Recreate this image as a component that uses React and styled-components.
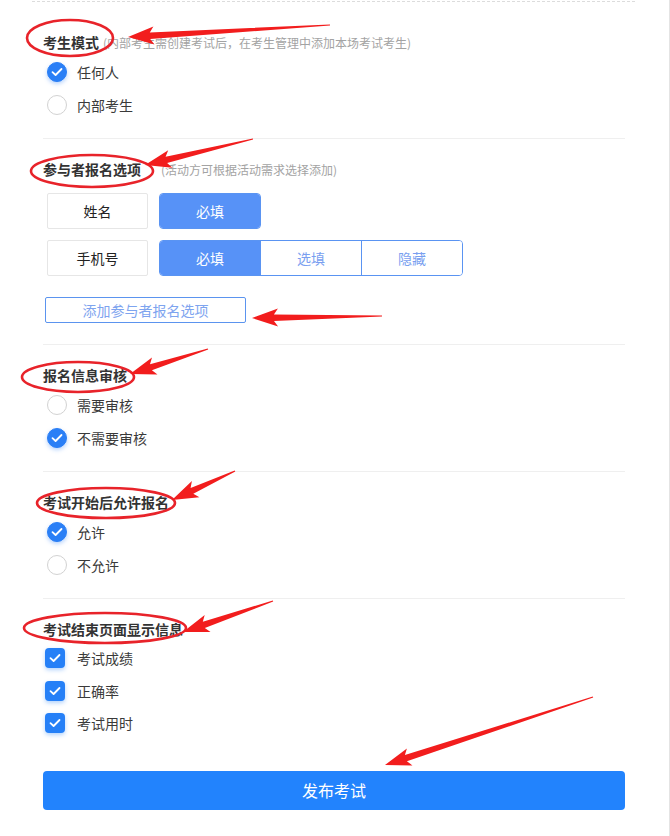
import React from "react";
import styled, { createGlobalStyle } from "styled-components";

const GlobalStyle = createGlobalStyle`
  body {
    margin: 0;
    background: #fff;
    font-family: "Noto Sans CJK SC", "Noto Sans", sans-serif;
  }
  * { box-sizing: border-box; }
`;

const sections = [
  {
    title: "考生模式",
    hint: "(内部考生需创建考试后，在考生管理中添加本场考试考生)",
    hintGap: 4,
    type: "radio",
    options: [
      { label: "任何人", checked: true },
      { label: "内部考生", checked: false },
    ],
  },
  { title: "参与者报名选项", hint: "(活动方可根据活动需求选择添加)", hintGap: 20, type: "fields" },
  {
    title: "报名信息审核",
    type: "radio",
    options: [
      { label: "需要审核", checked: false },
      { label: "不需要审核", checked: true },
    ],
  },
  {
    title: "考试开始后允许报名",
    type: "radio",
    options: [
      { label: "允许", checked: true },
      { label: "不允许", checked: false },
    ],
  },
  {
    title: "考试结束页面显示信息",
    type: "checkbox",
    options: [
      { label: "考试成绩", checked: true },
      { label: "正确率", checked: true },
      { label: "考试用时", checked: true },
    ],
  },
];

// red markup drawn on top of the screenshot
const ellipses = [
  { cx: 70, cy: 38, rx: 43, ry: 18 },
  { cx: 92, cy: 171, rx: 61, ry: 16 },
  { cx: 78, cy: 377, rx: 56, ry: 15 },
  { cx: 106, cy: 503, rx: 69, ry: 15 },
  { cx: 105, cy: 628, rx: 81, ry: 15 },
];

const arrows = [
  [330, 25, 128, 37],
  [253, 139, 145, 165],
  [382, 316, 252, 318],
  [208, 349, 130, 374],
  [235, 471, 172, 500],
  [273, 601, 183, 632],
  [593, 697, 385, 765],
];

function arrowPoints([x1, y1, x2, y2]) {
  const len = Math.hypot(x2 - x1, y2 - y1);
  const dx = (x2 - x1) / len;
  const dy = (y2 - y1) / len;
  const nx = -dy;
  const ny = dx;
  const headLen = 22;
  const bx = x2 - dx * headLen;
  const by = y2 - dy * headLen;
  const p = (x, y) => `${x.toFixed(1)},${y.toFixed(1)}`;
  return [
    p(x1 + nx * 0.6, y1 + ny * 0.6),
    p(bx + nx * 3.2, by + ny * 3.2),
    p(bx - dx * 4 + nx * 9, by - dy * 4 + ny * 9),
    p(x2, y2),
    p(bx - dx * 4 - nx * 9, by - dy * 4 - ny * 9),
    p(bx - nx * 3.2, by - ny * 3.2),
    p(x1 - nx * 0.6, y1 - ny * 0.6),
  ].join(" ");
}

function CheckMark() {
  return (
    <svg width="12" height="10" viewBox="0 0 12 10">
      <path d="M1.5 5.2 L4.6 8 L10.5 2" fill="none" stroke="#fff" strokeWidth="1.8" strokeLinecap="round" strokeLinejoin="round" />
    </svg>
  );
}

function Option({ type, label, checked }) {
  return (
    <OptionRow $type={type}>
      {type === "radio" ? (
        <RadioDot $checked={checked}>{checked && <CheckMark />}</RadioDot>
      ) : (
        <CheckBox>{checked && <CheckMark />}</CheckBox>
      )}
      <OptionLabel>{label}</OptionLabel>
    </OptionRow>
  );
}

function Fields() {
  return (
    <>
      <FieldRow>
        <FieldName>姓名</FieldName>
        <Segment $alone>
          <SegItem $active>必填</SegItem>
        </Segment>
      </FieldRow>
      <FieldRow $gap>
        <FieldName>手机号</FieldName>
        <Segment>
          <SegItem $active>必填</SegItem>
          <SegItem>选填</SegItem>
          <SegItem>隐藏</SegItem>
        </Segment>
      </FieldRow>
      <AddButton>添加参与者报名选项</AddButton>
    </>
  );
}

export default function App() {
  return (
    <>
      <GlobalStyle />
      <Page>
        <Wrapper>
          {sections.map((s) => (
            <Section key={s.title}>
              <TitleRow>
                <Title>{s.title}</Title>
                {s.hint && <Hint $gap={s.hintGap}>{s.hint}</Hint>}
              </TitleRow>
              {s.type === "fields" ? (
                <Fields />
              ) : (
                <OptionList>
                  {s.options.map((o) => (
                    <Option key={o.label} type={s.type} {...o} />
                  ))}
                </OptionList>
              )}
            </Section>
          ))}
          <PublishButton>发布考试</PublishButton>
        </Wrapper>
        <Markup viewBox="0 0 670 836">
          {ellipses.map((e, i) => (
            <ellipse key={i} {...e} fill="none" stroke="#e8232a" strokeWidth="2.6" />
          ))}
          {arrows.map((a, i) => (
            <polygon key={i} points={arrowPoints(a)} fill="#f21d1d" />
          ))}
        </Markup>
      </Page>
    </>
  );
}

const Page = styled.div`
  position: relative;
  width: 670px;
  height: 836px;
  overflow: hidden;
  border-right: 1px solid #e4e4e4;
`;

const Wrapper = styled.div`
  margin: 1px 0 0 32px;
  width: 603px;
  border-top: 1px dashed #dcdcdc;
  padding: 10px 10px 0 11px;
`;

const Section = styled.div`
  padding: 20px 0 17px;
  border-bottom: 1px solid #efefef;
  &:nth-last-of-type(1) {
    border-bottom: none;
    padding-bottom: 0;
  }
`;

const TitleRow = styled.div`
  display: flex;
  align-items: baseline;
  height: 20px;
  line-height: 20px;
`;

const Title = styled.span`
  font-size: 14px;
  font-weight: 700;
  color: #333;
`;

const Hint = styled.span`
  margin-left: ${(p) => p.$gap}px;
  font-size: 12px;
  color: #a3a3a3;
`;

const OptionList = styled.div`
  margin-top: 3px;
`;

const OptionRow = styled.div`
  display: flex;
  align-items: center;
  height: ${(p) => (p.$type === "radio" ? "33px" : "32.5px")};
  padding-left: ${(p) => (p.$type === "radio" ? "4px" : "2px")};
`;

const RadioDot = styled.span`
  width: 20px;
  height: 20px;
  border-radius: 50%;
  display: flex;
  align-items: center;
  justify-content: center;
  background: ${(p) => (p.$checked ? "#2a7ff6" : "#fff")};
  border: 1px solid ${(p) => (p.$checked ? "#2a7ff6" : "#d2d2d2")};
  box-shadow: ${(p) => (p.$checked ? "0 2px 4px rgba(42,127,246,0.35)" : "none")};
  margin-right: 10px;
`;

const CheckBox = styled.span`
  width: 20px;
  height: 20px;
  border-radius: 4px;
  display: flex;
  align-items: center;
  justify-content: center;
  background: #2680f7;
  box-shadow: 0 2px 4px rgba(38,128,247,0.35);
  margin-right: 12px;
`;

const OptionLabel = styled.span`
  font-size: 14px;
  color: #3a3a3a;
`;

const FieldRow = styled.div`
  display: flex;
  gap: 11px;
  padding-left: 4px;
  margin-top: ${(p) => (p.$gap ? "11px" : "14px")};
`;

const FieldName = styled.div`
  width: 101px;
  height: 36px;
  display: flex;
  align-items: center;
  justify-content: center;
  border: 1px solid #e6e6e6;
  border-radius: 2px;
  font-size: 14px;
  color: #222;
`;

const Segment = styled.div`
  display: flex;
  height: 36px;
  border: 1px solid #5a94f2;
  border-radius: 4px;
  overflow: hidden;
  background: ${(p) => (p.$alone ? "#5792f7" : "#fff")};
`;

const SegItem = styled.div`
  width: ${(p) => (p.$active ? "100px" : "101px")};
  display: flex;
  align-items: center;
  justify-content: center;
  font-size: 14px;
  background: ${(p) => (p.$active ? "#5792f7" : "#fff")};
  color: ${(p) => (p.$active ? "#fff" : "#7a9ff0")};
  & + & {
    border-left: 1px solid #5a94f2;
  }
`;

const AddButton = styled.button`
  display: block;
  margin: 21px 0 4px 2px;
  width: 201px;
  height: 26px;
  padding: 0;
  background: #fff;
  border: 1px solid #5b94ef;
  border-radius: 2px;
  font-family: inherit;
  font-size: 14px;
  color: #7ea4ef;
`;

const PublishButton = styled.button`
  display: block;
  margin-top: 31px;
  width: 582px;
  height: 39px;
  border: none;
  border-radius: 4px;
  background: #2283fd;
  font-family: inherit;
  font-size: 16px;
  color: #fff;
`;

const Markup = styled.svg`
  position: absolute;
  top: 0;
  left: 0;
  width: 670px;
  height: 836px;
  pointer-events: none;
`;
